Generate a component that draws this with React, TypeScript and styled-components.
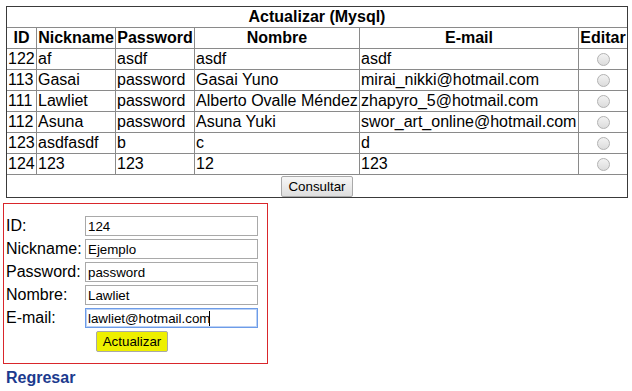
import React from 'react';
import styled, { createGlobalStyle } from 'styled-components';

const GlobalStyle = createGlobalStyle({
  'html, body': {
    margin: 0,
    padding: 0,
    background: '#ffffff'
  },
  body: {
    fontFamily: '"Liberation Sans", Arial, sans-serif',
    fontSize: '16px',
    color: '#000000'
  }
});

const Page = styled.div({
  padding: '6px 0 0 3px'
});

const Frame = styled.div({
  width: '622px',
  marginLeft: '3px',
  boxSizing: 'border-box',
  border: '1px solid #3a3a3a'
});

const Title = styled.div({
  height: '21px',
  boxSizing: 'border-box',
  paddingTop: '1px',
  lineHeight: '18px',
  fontWeight: 'bold',
  textAlign: 'center',
  borderBottom: '1px solid #8a8a8a'
});

const Grid = styled.div({
  display: 'grid',
  gridTemplateColumns: '30px 79px 79px 165px 219px 48px'
});

const Cell = styled.div<{ $head?: boolean; $center?: boolean }>((props) => ({
  height: '21px',
  boxSizing: 'border-box',
  padding: '1px',
  lineHeight: '18px',
  whiteSpace: 'nowrap',
  borderRight: '1px solid #8a8a8a',
  borderBottom: '1px solid #8a8a8a',
  fontWeight: props.$head ? 'bold' : 'normal',
  textAlign: props.$head || props.$center ? 'center' : 'left',
  display: props.$center ? 'flex' : 'block',
  alignItems: 'center',
  justifyContent: 'center',
  '&:nth-child(6n)': {
    borderRight: 'none'
  }
}));

const Radio = styled.input({
  appearance: 'none',
  width: '13px',
  height: '13px',
  margin: 0,
  borderRadius: '50%',
  border: '1px solid #b2b2b2',
  background: 'linear-gradient(#f2f2f2, #dcdcdc)',
  boxSizing: 'border-box'
});

const Footer = styled.div({
  display: 'flex',
  justifyContent: 'center',
  height: '22px',
  boxSizing: 'border-box',
  paddingTop: '1px'
});

const Button = styled.button<{ $highlight?: boolean }>((props) => ({
  height: '21px',
  boxSizing: 'border-box',
  padding: '0 6px',
  margin: 0,
  fontFamily: '"Liberation Sans", Arial, sans-serif',
  fontSize: '13.33px',
  color: '#000000',
  border: '1px solid #a9a9a9',
  borderRadius: '2px',
  background: props.$highlight ? '#eef000' : 'linear-gradient(#f7f7f7, #dedede)',
  cursor: 'pointer'
}));

const FormBox = styled.form({
  width: '265px',
  marginTop: '5px',
  boxSizing: 'border-box',
  border: '1px solid #d9262b',
  padding: '12px 9px 11px 2px'
});

const Fields = styled.div({
  display: 'grid',
  gridTemplateColumns: '79px 173px',
  rowGap: '3px',
  alignItems: 'center'
});

const Label = styled.label({
  lineHeight: '18px',
  whiteSpace: 'nowrap'
});

const InputWrap = styled.span({
  position: 'relative',
  display: 'block',
  height: '20px'
});

const Input = styled.input<{ $active?: boolean }>((props) => ({
  width: '173px',
  height: '20px',
  boxSizing: 'border-box',
  margin: 0,
  padding: '1px 2px',
  fontFamily: '"Liberation Sans", Arial, sans-serif',
  fontSize: '13.33px',
  color: '#000000',
  border: props.$active ? '1px solid #6d9ce8' : '1px solid #a9a9a9',
  boxShadow: props.$active ? 'inset 0 0 0 1px #bcd2f5' : 'none',
  outline: 'none'
}));

// text caret drawn over the active field
const Caret = styled.span({
  position: 'absolute',
  left: '124px',
  top: '3px',
  width: '1px',
  height: '15px',
  background: '#000000',
  pointerEvents: 'none'
});

const ButtonRow = styled.div({
  gridColumn: '1 / -1',
  justifySelf: 'center'
});

const BackLink = styled.a({
  display: 'inline-block',
  marginTop: '5px',
  marginLeft: '3px',
  lineHeight: '18px',
  fontWeight: 'bold',
  color: '#1b3a8e',
  textDecoration: 'none'
});

const headers = ['ID', 'Nickname', 'Password', 'Nombre', 'E-mail', 'Editar'];

const users = [
  ['122', 'af', 'asdf', 'asdf', 'asdf'],
  ['113', 'Gasai', 'password', 'Gasai Yuno', 'mirai_nikki@hotmail.com'],
  ['111', 'Lawliet', 'password', 'Alberto Ovalle Méndez', 'zhapyro_5@hotmail.com'],
  ['112', 'Asuna', 'password', 'Asuna Yuki', 'swor_art_online@hotmail.com'],
  ['123', 'asdfasdf', 'b', 'c', 'd'],
  ['124', '123', '123', '12', '123']
];

const fields = [
  { label: 'ID:', value: '124' },
  { label: 'Nickname:', value: 'Ejemplo' },
  { label: 'Password:', value: 'password' },
  { label: 'Nombre:', value: 'Lawliet' },
  { label: 'E-mail:', value: 'lawliet@hotmail.com' }
];

export default function App() {
  return (
    <Page>
      <GlobalStyle />
      <Frame>
        <Title>Actualizar (Mysql)</Title>
        <Grid>
          {headers.map((h) => (
            <Cell key={h} $head>
              {h}
            </Cell>
          ))}
          {users.map((row) => (
            <React.Fragment key={row[0] + row[1]}>
              {row.map((value, i) => (
                <Cell key={i}>{value}</Cell>
              ))}
              <Cell $center>
                <Radio type='radio' name='editar' readOnly />
              </Cell>
            </React.Fragment>
          ))}
        </Grid>
        <Footer>
          <Button type='button'>Consultar</Button>
        </Footer>
      </Frame>
      <FormBox onSubmit={(e) => e.preventDefault()}>
        <Fields>
          {fields.map((f, i) => {
            const last = i === fields.length - 1;
            return (
              <React.Fragment key={f.label}>
                <Label>{f.label}</Label>
                <InputWrap>
                  <Input type='text' defaultValue={f.value} $active={last} />
                  {last && <Caret />}
                </InputWrap>
              </React.Fragment>
            );
          })}
          <ButtonRow>
            <Button type='submit' $highlight>
              Actualizar
            </Button>
          </ButtonRow>
        </Fields>
      </FormBox>
      <BackLink href='#'>Regresar</BackLink>
    </Page>
  );
}
